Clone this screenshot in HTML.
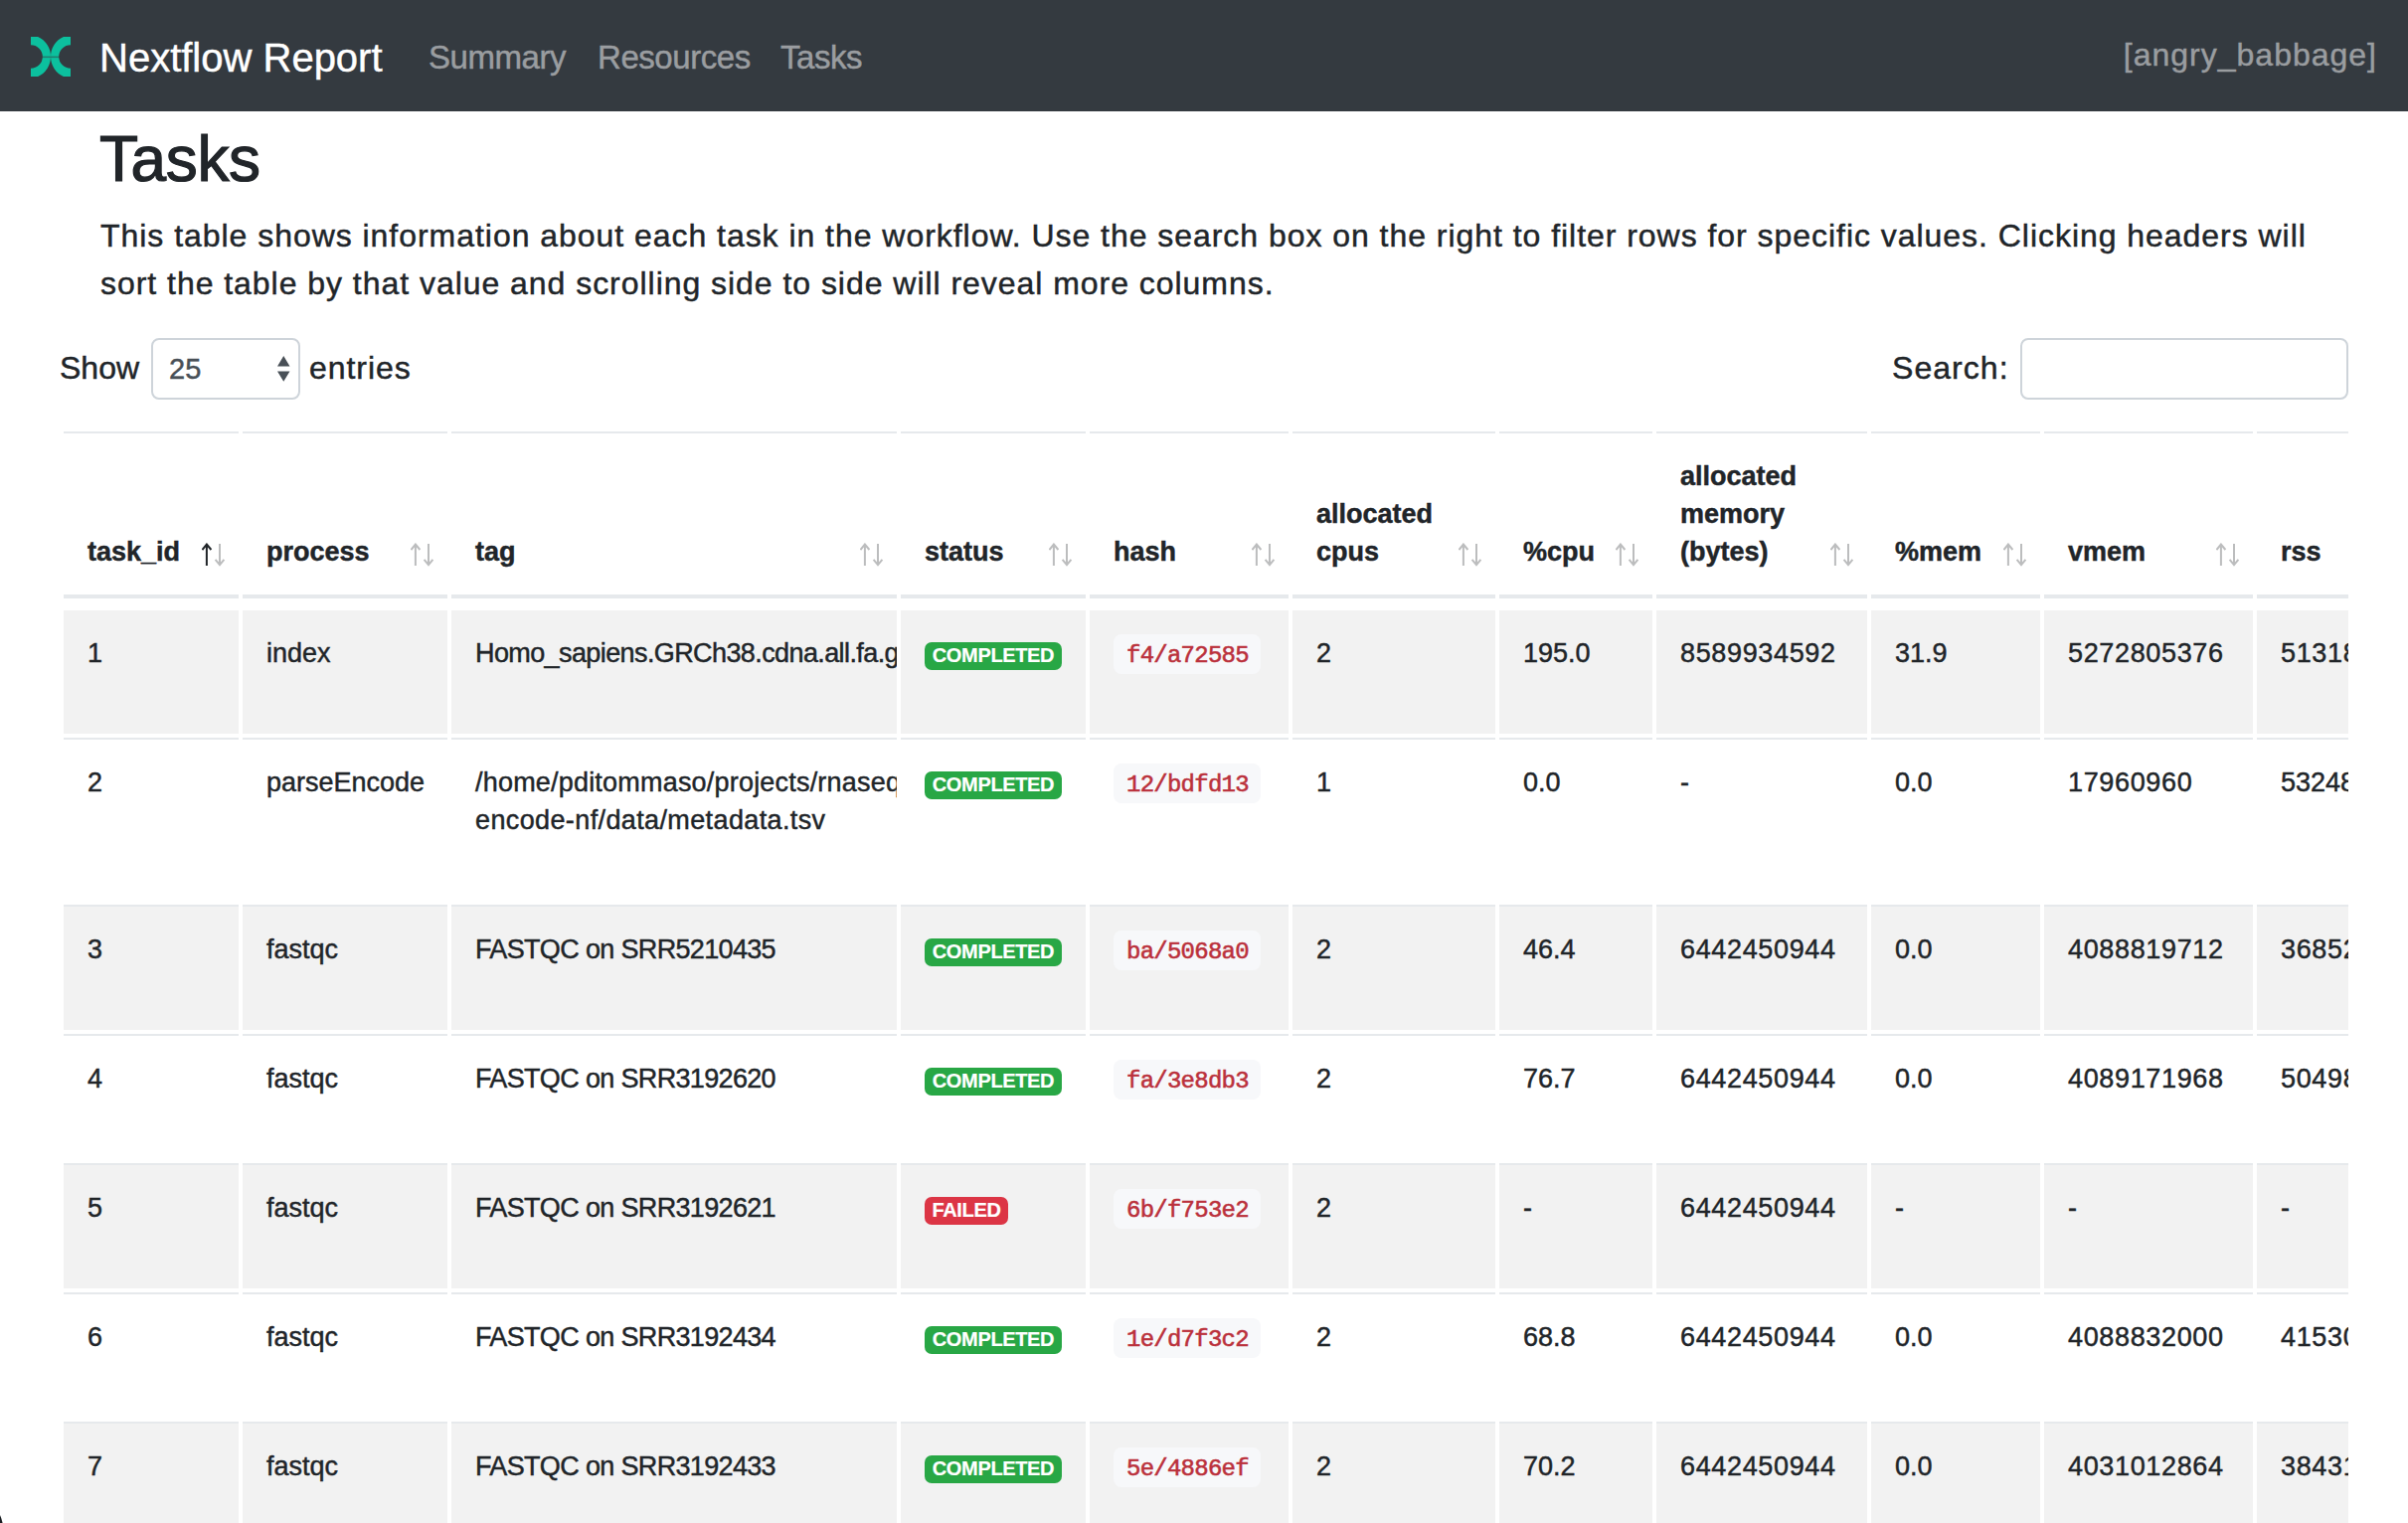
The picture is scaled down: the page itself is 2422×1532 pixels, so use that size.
<!DOCTYPE html>
<html><head><meta charset="utf-8">
<style>
*{box-sizing:border-box;margin:0;padding:0}
html,body{width:2422px;height:1532px;overflow:hidden;background:#fff}
body{font-family:"Liberation Sans",sans-serif;color:#212529;position:relative;-webkit-text-stroke-width:.45px}
.abs{position:absolute;white-space:nowrap}
nav{position:absolute;left:0;top:0;width:2422px;height:112px;background:#343a40}
.brand{left:100px;top:38px;font-size:40px;line-height:40px;color:#fff}
.nl{top:41px;font-size:33px;line-height:33px;color:#9a9da0;letter-spacing:-.45px}
h1{position:absolute;left:100px;top:128px;font-size:64px;line-height:64px;font-weight:normal;-webkit-text-stroke:1.2px #212529;letter-spacing:-.4px;white-space:nowrap;color:#212529}
p.lead{position:absolute;left:101px;top:213px;width:2300px;font-size:32px;line-height:48px;letter-spacing:.96px;white-space:nowrap}
.lbl{font-size:32px;line-height:32px;top:354px}
.sel{position:absolute;left:152px;top:340px;width:150px;height:62px;border:2px solid #ced4da;border-radius:8px;background:#fff}
.inp{position:absolute;left:2032px;top:340px;width:330px;height:62px;border:2px solid #ced4da;border-radius:8px;background:#fff}
.clip{position:absolute;left:60px;top:430px;width:2302px;height:1102px;overflow:hidden}
table{width:2434px;border-collapse:separate;border-spacing:4px;table-layout:fixed;font-size:27px;line-height:38px}
td,th{padding:24px;text-align:left;vertical-align:top;white-space:nowrap;overflow:hidden}
th{font-weight:bold;vertical-align:bottom;border-top:2px solid #e6e9ec;border-bottom:4px solid #e6e9ec;height:168px;position:relative}
td{border-top:2px solid #e6e9ec}
tr.first td{border-top:none}
tr.odd td{background:#f2f2f2}
.badge{display:inline-block;color:#fff;font-weight:bold;font-size:20px;line-height:26px;height:28px;letter-spacing:-.35px;-webkit-text-stroke-width:.2px;border-radius:7px;text-align:center;vertical-align:top;margin-top:8px}
.ok{background:#28a745;width:138px}
.bad{background:#dc3545;width:84px}
code{display:inline-block;font-family:"Liberation Mono",monospace;font-size:24px;letter-spacing:-.75px;line-height:38px;height:40px;width:148px;padding:3px 0 0 13px;background:#f7f8fa;color:#bb313c;border-radius:8px;vertical-align:top;-webkit-text-stroke-width:.55px}
td.n{letter-spacing:.65px}
td.fq{letter-spacing:-.66px}
td.hs{letter-spacing:-.6px}
.ar{position:absolute;right:11px;bottom:28px;width:26px;height:24px}
</style></head><body>
<nav>
<svg class="abs" style="left:31px;top:37px" width="40" height="40" viewBox="0 0 40 40">
<path fill="#0cc09e" d="M0 0 L7.1 0 A21.95 21.95 0 0 1 7.1 40 L0 40 L0 31.8 A11.8 11.8 0 1 0 0 8.2 Z"/>
<path fill="#0cc09e" d="M40 0 L32.9 0 A21.95 21.95 0 0 0 32.9 40 L40 40 L40 31.8 A11.8 11.8 0 1 1 40 8.2 Z"/>
<rect x="10" y="19.6" width="20" height="1.5" fill="#343a40" opacity=".5"/>
</svg>
<div class="abs brand">Nextflow Report</div>
<div class="abs nl" style="left:431px">Summary</div>
<div class="abs nl" style="left:601px">Resources</div>
<div class="abs nl" style="left:785px">Tasks</div>
<div class="abs nl" style="right:31px;top:39px;letter-spacing:1px;font-size:32px;line-height:32px">[angry_babbage]</div>
</nav>
<h1>Tasks</h1>
<p class="lead">This table shows information about each task in the workflow. Use the search box on the right to filter rows for specific values. Clicking headers will<br>sort the table by that value and scrolling side to side will reveal more columns.</p>
<div class="abs lbl" style="left:60px">Show</div>
<div class="sel"><div class="abs" style="left:16px;top:15px;font-size:29px;line-height:29px;color:#495057">25</div>
<svg class="abs" style="left:125px;top:16px" width="13" height="26" viewBox="0 0 13 26"><path d="M6.25 0 L12.5 10.5 L0 10.5Z M0 15.4 L12.5 15.4 L6.25 25.7Z" fill="#495057"/></svg></div>
<div class="abs lbl" style="left:311px;letter-spacing:.95px">entries</div>
<div class="abs lbl" style="left:1903px;letter-spacing:1.05px">Search:</div>
<div class="inp"></div>

<div class="clip">
<table id="th" style="position:absolute;left:0;top:0">
<colgroup><col style="width:176px"><col style="width:206px"><col style="width:448px"><col style="width:186px"><col style="width:200px"><col style="width:204px"><col style="width:154px"><col style="width:212px"><col style="width:170px"><col style="width:210px"><col style="width:220px"></colgroup>
<tr>
<th>task_id<svg class="ar" viewBox="0 0 26 24"><path d="M4.9 1.5V23M0.4 7L4.9 1.5L9.4 7" stroke="#212529" stroke-width="2" fill="none"/><path d="M18 1V22.5M13.6 16.9L18 22.2L22.4 16.9" stroke="#bcbdbe" stroke-width="2" fill="none"/></svg></th><th>process<svg class="ar" viewBox="0 0 26 24"><path d="M4.9 1.5V23M0.4 7L4.9 1.5L9.4 7" stroke="#bcbdbe" stroke-width="2" fill="none"/><path d="M18 1V22.5M13.6 16.9L18 22.2L22.4 16.9" stroke="#bcbdbe" stroke-width="2" fill="none"/></svg></th><th>tag<svg class="ar" viewBox="0 0 26 24"><path d="M4.9 1.5V23M0.4 7L4.9 1.5L9.4 7" stroke="#bcbdbe" stroke-width="2" fill="none"/><path d="M18 1V22.5M13.6 16.9L18 22.2L22.4 16.9" stroke="#bcbdbe" stroke-width="2" fill="none"/></svg></th><th>status<svg class="ar" viewBox="0 0 26 24"><path d="M4.9 1.5V23M0.4 7L4.9 1.5L9.4 7" stroke="#bcbdbe" stroke-width="2" fill="none"/><path d="M18 1V22.5M13.6 16.9L18 22.2L22.4 16.9" stroke="#bcbdbe" stroke-width="2" fill="none"/></svg></th><th>hash<svg class="ar" viewBox="0 0 26 24"><path d="M4.9 1.5V23M0.4 7L4.9 1.5L9.4 7" stroke="#bcbdbe" stroke-width="2" fill="none"/><path d="M18 1V22.5M13.6 16.9L18 22.2L22.4 16.9" stroke="#bcbdbe" stroke-width="2" fill="none"/></svg></th><th>allocated<br>cpus<svg class="ar" viewBox="0 0 26 24"><path d="M4.9 1.5V23M0.4 7L4.9 1.5L9.4 7" stroke="#bcbdbe" stroke-width="2" fill="none"/><path d="M18 1V22.5M13.6 16.9L18 22.2L22.4 16.9" stroke="#bcbdbe" stroke-width="2" fill="none"/></svg></th><th>%cpu<svg class="ar" viewBox="0 0 26 24"><path d="M4.9 1.5V23M0.4 7L4.9 1.5L9.4 7" stroke="#bcbdbe" stroke-width="2" fill="none"/><path d="M18 1V22.5M13.6 16.9L18 22.2L22.4 16.9" stroke="#bcbdbe" stroke-width="2" fill="none"/></svg></th><th>allocated<br>memory<br>(bytes)<svg class="ar" viewBox="0 0 26 24"><path d="M4.9 1.5V23M0.4 7L4.9 1.5L9.4 7" stroke="#bcbdbe" stroke-width="2" fill="none"/><path d="M18 1V22.5M13.6 16.9L18 22.2L22.4 16.9" stroke="#bcbdbe" stroke-width="2" fill="none"/></svg></th><th>%mem<svg class="ar" viewBox="0 0 26 24"><path d="M4.9 1.5V23M0.4 7L4.9 1.5L9.4 7" stroke="#bcbdbe" stroke-width="2" fill="none"/><path d="M18 1V22.5M13.6 16.9L18 22.2L22.4 16.9" stroke="#bcbdbe" stroke-width="2" fill="none"/></svg></th><th>vmem<svg class="ar" viewBox="0 0 26 24"><path d="M4.9 1.5V23M0.4 7L4.9 1.5L9.4 7" stroke="#bcbdbe" stroke-width="2" fill="none"/><path d="M18 1V22.5M13.6 16.9L18 22.2L22.4 16.9" stroke="#bcbdbe" stroke-width="2" fill="none"/></svg></th><th>rss<svg class="ar" viewBox="0 0 26 24"><path d="M4.9 1.5V23M0.4 7L4.9 1.5L9.4 7" stroke="#bcbdbe" stroke-width="2" fill="none"/><path d="M18 1V22.5M13.6 16.9L18 22.2L22.4 16.9" stroke="#bcbdbe" stroke-width="2" fill="none"/></svg></th>
</tr></table>
<table id="tb" style="position:absolute;left:0;top:180px">
<colgroup><col style="width:176px"><col style="width:206px"><col style="width:448px"><col style="width:186px"><col style="width:200px"><col style="width:204px"><col style="width:154px"><col style="width:212px"><col style="width:170px"><col style="width:210px"><col style="width:220px"></colgroup>
<tr class="first odd" style="height:124px"><td>1</td><td>index</td><td class="hs">Homo_sapiens.GRCh38.cdna.all.fa.gz</td><td><span class="badge ok">COMPLETED</span></td><td><code>f4/a72585</code></td><td>2</td><td>195.0</td><td class="n">8589934592</td><td>31.9</td><td class="n">5272805376</td><td class="n">513183744</td></tr>
<tr style="height:164px"><td>2</td><td>parseEncode</td><td><span style="letter-spacing:.2px">/home/pditommaso/projects/rnaseq-</span><br><span style="letter-spacing:.38px">encode-nf/data/metadata.tsv</span></td><td><span class="badge ok">COMPLETED</span></td><td><code>12/bdfd13</code></td><td>1</td><td>0.0</td><td>-</td><td>0.0</td><td class="n">17960960</td><td>532480</td></tr>
<tr class="odd" style="height:126px"><td>3</td><td>fastqc</td><td class="fq">FASTQC on SRR5210435</td><td><span class="badge ok">COMPLETED</span></td><td><code>ba/5068a0</code></td><td>2</td><td>46.4</td><td class="n">6442450944</td><td>0.0</td><td class="n">4088819712</td><td class="n">368525312</td></tr>
<tr style="height:126px"><td>4</td><td>fastqc</td><td class="fq">FASTQC on SRR3192620</td><td><span class="badge ok">COMPLETED</span></td><td><code>fa/3e8db3</code></td><td>2</td><td>76.7</td><td class="n">6442450944</td><td>0.0</td><td class="n">4089171968</td><td class="n">504987648</td></tr>
<tr class="odd" style="height:126px"><td>5</td><td>fastqc</td><td class="fq">FASTQC on SRR3192621</td><td><span class="badge bad">FAILED</span></td><td><code>6b/f753e2</code></td><td>2</td><td>-</td><td class="n">6442450944</td><td>-</td><td>-</td><td>-</td></tr>
<tr style="height:126px"><td>6</td><td>fastqc</td><td class="fq">FASTQC on SRR3192434</td><td><span class="badge ok">COMPLETED</span></td><td><code>1e/d7f3c2</code></td><td>2</td><td>68.8</td><td class="n">6442450944</td><td>0.0</td><td class="n">4088832000</td><td class="n">415301632</td></tr>
<tr class="odd" style="height:126px"><td>7</td><td>fastqc</td><td class="fq">FASTQC on SRR3192433</td><td><span class="badge ok">COMPLETED</span></td><td><code>5e/4886ef</code></td><td>2</td><td>70.2</td><td class="n">6442450944</td><td>0.0</td><td class="n">4031012864</td><td class="n">384311296</td></tr>
</table>
</div>
<svg class="abs" style="left:0;top:1524px" width="4" height="8" viewBox="0 0 4 8"><path d="M0 0 L1.2 3 L2.6 8 L0 8Z" fill="#1b1e22"/></svg>
</body></html>
